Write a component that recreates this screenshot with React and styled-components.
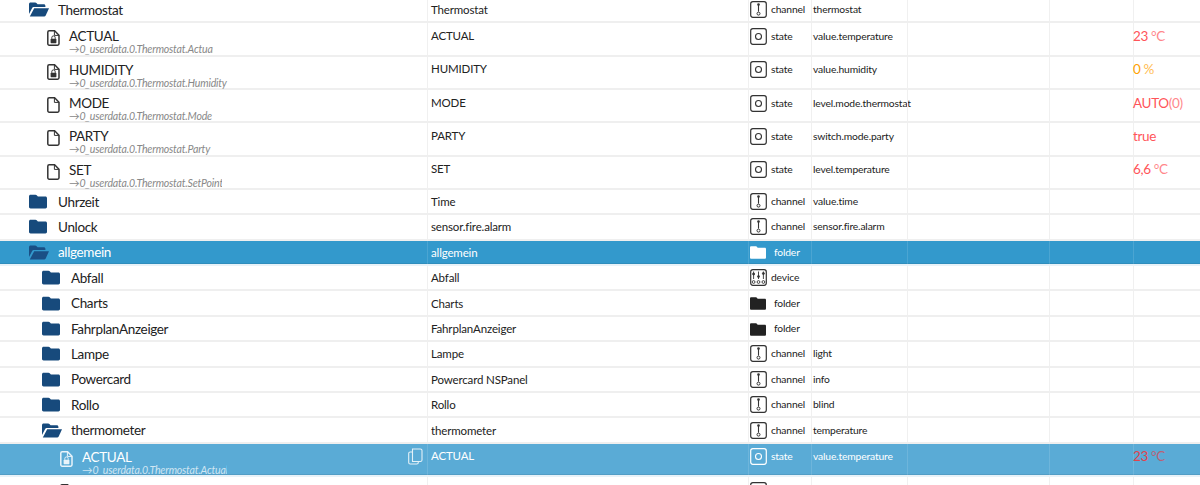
import React from "react";
import styled, { createGlobalStyle } from "styled-components";

const Global = createGlobalStyle`
  html, body {
    margin: 0;
    padding: 0;
    background: #fff;
    overflow: hidden;
  }
  body {
    font-family: Lato, "DejaVu Sans", sans-serif;
    color: #222;
  }
`;

const Page = styled.div`
  width: 1200px;
  height: 485px;
  overflow: hidden;
`;

// the tree is scrolled a bit, first row is cut at the top
const Tree = styled.div`
  margin-top: -2px;
`;

const bg = { none: "#fff", folder: "#3399cc", state: "#5aabd6" };

const Row = styled.div`
  display: grid;
  grid-template-columns: 427px 321px 63px 96px 142px 84px 67px;
  height: ${(p) => (p.$tall ? 33.3 : 25.4)}px;
  box-sizing: border-box;
  border-bottom: 2px solid ${(p) => (p.$sel === "none" ? "#efefef" : "#e8f2f8")};
  background: ${(p) => bg[p.$sel]};
  box-shadow: ${(p) => (p.$sel === "none" ? "none" : "inset 0 -1px rgba(0,0,0,0.08)")};
  color: ${(p) => (p.$sel === "none" ? "#222" : "#fff")};
`;

const Cell = styled.div`
  display: flex;
  align-items: ${(p) => (p.$tall ? "flex-start" : "center")};
  padding-top: ${(p) => (p.$tall ? 4.6 : 0)}px;
  box-sizing: border-box;
  border-left: 1px solid ${(p) => (p.$sel === "none" ? "#f0f0f0" : "rgba(255,255,255,0.12)")};
  font-size: 12px;
  min-width: 0;
  white-space: nowrap;
`;

const NameCell = styled.div`
  position: relative;
  display: flex;
  align-items: ${(p) => (p.$tall ? "flex-start" : "center")};
  padding-left: ${(p) => p.$indent}px;
  padding-top: ${(p) => (p.$tall ? 5 : 0)}px;
  box-sizing: border-box;
  min-width: 0;
`;

const IconSlot = styled.span`
  display: flex;
  flex: none;
  width: ${(p) => p.$w}px;
  padding-top: ${(p) => p.$top || 0}px;
`;

const Title = styled.div`
  font-size: 13.5px;
  letter-spacing: -0.35px;
  line-height: 16px;
  white-space: nowrap;
`;

const Sub = styled.div`
  width: ${(p) => p.$w}px;
  margin-top: -1px;
  overflow: hidden;
  font-size: 10.6px;
  letter-spacing: -0.2px;
  line-height: 12px;
  font-style: italic;
  white-space: nowrap;
  color: ${(p) => (p.$sel === "none" ? "#888" : "rgba(255,255,255,0.72)")};
`;

const CopyBtn = styled.span`
  position: absolute;
  right: 4px;
  top: 4px;
  display: flex;
`;

const NameText = styled.span`
  padding-left: 3px;
  font-size: 11.5px;
  letter-spacing: -0.15px;
  line-height: 15px;
`;

const TypeIcon = styled.span`
  display: flex;
  margin-left: 1px;
  width: 21px;
  flex: none;
`;

const TypeText = styled.span`
  padding-left: ${(p) => (p.$folder ? 3 : 0)}px;
  font-size: 10.3px;
  letter-spacing: -0.15px;
  line-height: 17px;
`;

const RoleText = styled.span`
  padding-left: 1px;
  font-size: 10.3px;
  letter-spacing: -0.15px;
  line-height: 17px;
`;

const Value = styled.span`
  margin-left: -1px;
  font-size: 13.5px;
  letter-spacing: -0.35px;
  line-height: 17px;
  color: ${(p) => p.$color};
`;

const Unit = styled.span`
  opacity: 0.7;
`;

const FolderClosed = ({ color }) => (
  <svg width="18" height="15" viewBox="0 0 18 15">
    <path
      fill={color}
      d="M1.6 .8h4.9c.5 0 .9.2 1.2.5l1.2 1.3h7.5c.9 0 1.6.7 1.6 1.6v8.6c0 .9-.7 1.6-1.6 1.6H1.6C.7 14.4 0 13.7 0 12.8V2.4C0 1.5.7.8 1.6.8z"
    />
  </svg>
);

const FolderOpen = ({ color }) => (
  <svg width="20" height="15" viewBox="0 0 20 15">
    <path
      fill={color}
      d="M0 12V2.2C0 1.3.7.6 1.6.6h4.6c.5 0 .9.2 1.2.5l1.2 1.2h6.2c.9 0 1.6.7 1.6 1.6v1.1H5.2c-1 0-1.8.5-2.3 1.4z"
    />
    <path fill={color} d="M5.2 6.2H20l-3.3 7.2c-.3.6-.9 1-1.5 1H.8z" />
  </svg>
);

const FileIcon = ({ color, lock }) => (
  <svg width="13" height="16" viewBox="0 0 13 16" fill="none">
    <path
      d="M2.2 .8h5.4L12 5.2v8.6c0 .8-.6 1.4-1.4 1.4H2.2c-.8 0-1.4-.6-1.4-1.4V2.2C.8 1.4 1.4.8 2.2.8z"
      stroke={color}
      strokeWidth="1.5"
    />
    <path d="M7.4 1v4.4H12" stroke={color} strokeWidth="1" />
    {lock && (
      <>
        <rect x="3.6" y="8.8" width="5.8" height="4.4" rx=".6" fill={color} />
        <path d="M4.8 8.8V7.6a1.7 1.7 0 0 1 3.4 0v1.2" stroke={color} strokeWidth="1" />
      </>
    )}
  </svg>
);

const CopyIcon = () => (
  <svg width="15" height="17" viewBox="0 0 15 17" fill="none" stroke="#e3f1f8" strokeWidth="1.1">
    <path d="M4.5 1h7.9c.9 0 1.6.7 1.6 1.6v9.3c0 .9-.7 1.6-1.6 1.6H4.5V1z" />
    <path d="M4.5 4H2.2C1.4 4 .7 4.7.7 5.5v9c0 .8.7 1.5 1.5 1.5h6.6c.8 0 1.5-.7 1.5-1.5v-1" />
  </svg>
);

const Frame = ({ color, children }) => (
  <svg width="17" height="17" viewBox="0 0 17 17" fill="none" stroke={color}>
    <rect x=".7" y=".7" width="15.6" height="15.6" rx="2.2" strokeWidth="1.2" />
    {children}
  </svg>
);

const StateIcon = ({ color }) => (
  <Frame color={color}>
    <circle cx="8.5" cy="8.5" r="3" strokeWidth="1.1" />
  </Frame>
);

const ChannelIcon = ({ color }) => (
  <Frame color={color}>
    <circle cx="8.5" cy="3.6" r="1.3" fill={color} stroke="none" />
    <path d="M8.5 4v6.6" strokeWidth="1.1" />
    <circle cx="8.5" cy="12.6" r="1.5" strokeWidth="1" />
  </Frame>
);

const DeviceIcon = ({ color }) => (
  <Frame color={color}>
    <g strokeWidth=".9">
      <path d="M3.6 2.5v7.5M8.5 2.5v7.5M13.4 2.5v7.5" />
      <circle cx="3.6" cy="5" r="1" fill={color} />
      <circle cx="8.5" cy="7.5" r="1" fill={color} />
      <circle cx="13.4" cy="4.5" r="1" fill={color} />
      <circle cx="3.6" cy="13" r="1.4" />
      <circle cx="8.5" cy="13" r="1.4" />
      <circle cx="13.4" cy="13" r="1.4" />
    </g>
  </Frame>
);

const FolderType = ({ color }) => (
  <svg width="16" height="13" viewBox="0 0 18 14" style={{ marginTop: 1 }}>
    <path
      fill={color}
      d="M1.4 0h5.1c.4 0 .8.2 1.1.5l1.1 1.2h7.9c.8 0 1.4.6 1.4 1.4v9.5c0 .8-.6 1.4-1.4 1.4H1.4C.6 14 0 13.4 0 12.6V1.4C0 .6.6 0 1.4 0z"
    />
  </svg>
);

const rows = [
  { kind: "open", indent: 29, title: "Thermostat", name: "Thermostat", type: "channel", role: "thermostat" },
  { kind: "lock", indent: 47, title: "ACTUAL", sub: "→0_userdata.0.Thermostat.Actual", subW: 144, name: "ACTUAL", type: "state", role: "value.temperature", value: "23", unit: " °C", color: "#ff5459" },
  { kind: "lock", indent: 47, title: "HUMIDITY", sub: "→0_userdata.0.Thermostat.Humidity", subW: 160, name: "HUMIDITY", type: "state", role: "value.humidity", value: "0", unit: " %", color: "#ffa200" },
  { kind: "file", indent: 47, title: "MODE", sub: "→0_userdata.0.Thermostat.Mode", subW: 160, name: "MODE", type: "state", role: "level.mode.thermostat", value: "AUTO", unit: "(0)", color: "#ff5459" },
  { kind: "file", indent: 47, title: "PARTY", sub: "→0_userdata.0.Thermostat.Party", subW: 160, name: "PARTY", type: "state", role: "switch.mode.party", value: "true", color: "#ff5459" },
  { kind: "file", indent: 47, title: "SET", sub: "→0_userdata.0.Thermostat.SetPoint", subW: 153, name: "SET", type: "state", role: "level.temperature", value: "6,6", unit: " °C", color: "#ff5459" },
  { kind: "closed", indent: 29, title: "Uhrzeit", name: "Time", type: "channel", role: "value.time" },
  { kind: "closed", indent: 29, title: "Unlock", name: "sensor.fire.alarm", type: "channel", role: "sensor.fire.alarm" },
  { kind: "open", indent: 29, title: "allgemein", name: "allgemein", type: "folder", sel: "folder" },
  { kind: "closed", indent: 42, title: "Abfall", name: "Abfall", type: "device" },
  { kind: "closed", indent: 42, title: "Charts", name: "Charts", type: "folder" },
  { kind: "closed", indent: 42, title: "FahrplanAnzeiger", name: "FahrplanAnzeiger", type: "folder" },
  { kind: "closed", indent: 42, title: "Lampe", name: "Lampe", type: "channel", role: "light" },
  { kind: "closed", indent: 42, title: "Powercard", name: "Powercard NSPanel", type: "channel", role: "info" },
  { kind: "closed", indent: 42, title: "Rollo", name: "Rollo", type: "channel", role: "blind" },
  { kind: "open", indent: 42, title: "thermometer", name: "thermometer", type: "channel", role: "temperature" },
  { kind: "lock", indent: 60, title: "ACTUAL", sub: "→0_userdata.0.Thermostat.Actual", subW: 145, name: "ACTUAL", type: "state", role: "value.temperature", value: "23", unit: " °C", color: "#e0434d", sel: "state", copy: true },
  { kind: "lock", indent: 60, title: "HUMIDITY", sub: "→0_userdata.0.Thermostat.Humidity", subW: 160, name: "HUMIDITY", type: "state", role: "value.temperature", value: "23", unit: " °C", color: "#ff5459" },
];

const NameIcon = ({ kind, sel }) => {
  const folderColor = sel === "folder" ? "#1a4f85" : "#174a7c";
  const fileColor = sel === "none" ? "#333" : "#e9f4fa";
  if (kind === "open") return <IconSlot $w={29}><FolderOpen color={folderColor} /></IconSlot>;
  if (kind === "closed") return <IconSlot $w={29}><FolderClosed color={folderColor} /></IconSlot>;
  return <IconSlot $w={22} $top={2}><FileIcon color={fileColor} lock={kind === "lock"} /></IconSlot>;
};

const TypeGlyph = ({ type, sel }) => {
  const color = sel === "none" ? "#333" : "#fff";
  if (type === "state") return <StateIcon color={color} />;
  if (type === "channel") return <ChannelIcon color={color} />;
  if (type === "device") return <DeviceIcon color={color} />;
  return <FolderType color={sel === "none" ? "#222" : "#fff"} />;
};

const TreeRow = ({ row }) => {
  const sel = row.sel || "none";
  const tall = !!row.sub;
  return (
    <Row $tall={tall} $sel={sel}>
      <NameCell $tall={tall} $indent={row.indent}>
        <NameIcon kind={row.kind} sel={sel} />
        <div>
          <Title>{row.title}</Title>
          {row.sub && <Sub $w={row.subW} $sel={sel}>{row.sub}</Sub>}
        </div>
        {row.copy && <CopyBtn><CopyIcon /></CopyBtn>}
      </NameCell>
      <Cell $tall={tall} $sel={sel}><NameText>{row.name}</NameText></Cell>
      <Cell $tall={tall} $sel={sel}>
        <TypeIcon><TypeGlyph type={row.type} sel={sel} /></TypeIcon>
        <TypeText $folder={row.type === "folder"}>{row.type}</TypeText>
      </Cell>
      <Cell $tall={tall} $sel={sel}><RoleText>{row.role}</RoleText></Cell>
      <Cell $tall={tall} $sel={sel} />
      <Cell $tall={tall} $sel={sel} />
      <Cell $tall={tall} $sel={sel}>
        {row.value && (
          <Value $color={row.color}>
            {row.value}
            {row.unit && <Unit>{row.unit}</Unit>}
          </Value>
        )}
      </Cell>
    </Row>
  );
};

export default function App() {
  return (
    <Page>
      <Global />
      <Tree>
        {rows.map((row, i) => (
          <TreeRow key={i} row={row} />
        ))}
      </Tree>
    </Page>
  );
}
